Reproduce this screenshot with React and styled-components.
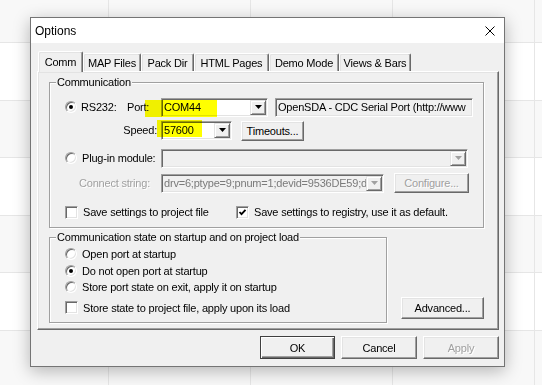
import React from "react";
import styled, { createGlobalStyle, css } from "styled-components";

const GlobalStyle = createGlobalStyle`
  html, body {
    margin: 0;
    padding: 0;
  }
  body {
    font-family: "Liberation Sans", Arial, sans-serif;
    font-size: 11px;
    letter-spacing: -0.2px;
    color: #000;
  }
`;

const Desktop = styled.div`
  width: 542px;
  height: 385px;
  box-sizing: border-box;
  padding: 17px 0 0 30px;
  overflow: hidden;
  background-color: #fff;
  background-image:
    repeating-linear-gradient(90deg, transparent 0 108px, #e6e6e6 108px 109px, transparent 109px 142px),
    repeating-linear-gradient(180deg, transparent 0 42px, #e6e6e6 42px 43px, transparent 43px 57.6px),
    repeating-linear-gradient(180deg, #f8f8f8 0 42px, #fff 42px 99.6px, #f8f8f8 99.6px 115.2px);
`;

const Window = styled.div`
  width: 475px;
  height: 350px;
  box-sizing: border-box;
  border: 1px solid #747474;
  background: #f0f0f0;
  box-shadow: 0 4px 16px rgba(0, 0, 0, 0.28);
  display: flex;
  flex-direction: column;
`;

const TitleBar = styled.div`
  height: 25px;
  flex-shrink: 0;
  background: #fff;
  display: flex;
  align-items: center;
  justify-content: space-between;
  padding: 0 9px 0 4px;
`;

const Title = styled.span`
  font-size: 12px;
  letter-spacing: 0;
`;

const Body = styled.div`
  flex: 1;
  display: flex;
  flex-direction: column;
  padding: 8px 5px 7px 6px;
`;

const TabStrip = styled.div`
  display: flex;
  align-items: flex-end;
  height: 20px;
  padding-left: 1px;
  position: relative;
  z-index: 1;
`;

const Tab = styled.div`
  width: ${(p) => p.$w}px;
  height: 18px;
  box-sizing: border-box;
  border: 1px solid;
  border-bottom: none;
  border-color: #fff #696969 transparent #fff;
  border-radius: 2px 2px 0 0;
  box-shadow: inset -1px 0 #a0a0a0, inset 1px 1px #e3e3e3;
  background: #f0f0f0;
  display: flex;
  align-items: center;
  justify-content: center;
  padding-top: 1px;

  ${(p) =>
    p.$active &&
    css`
      height: 21px;
      margin-bottom: -1px;
      padding-bottom: 2px;
    `}
`;

const Panel = styled.div`
  height: 259px;
  box-sizing: border-box;
  border: 1px solid;
  border-color: #fff #696969 #696969 #fff;
  box-shadow: inset -1px -1px #a0a0a0, inset 1px 1px #e3e3e3;
  padding: 4px 13px 0 11px;
  display: flex;
  flex-direction: column;
`;

const Group = styled.fieldset`
  width: ${(p) => p.$w}px;
  box-sizing: border-box;
  margin: 0;
  padding: 0;
  min-width: 0;
  border: 1px solid #a0a0a0;
  box-shadow: 1px 1px 0 #fff, inset 1px 1px 0 #fff;
`;

const Legend = styled.legend`
  margin-left: 6px;
  padding: 0 1px;
  line-height: 13px;
  background: #f0f0f0;
`;

const GroupBody = styled.div`
  display: flex;
  flex-direction: column;
  padding: ${(p) => p.$pad};
`;

const Row = styled.div`
  position: relative;
  display: flex;
  align-items: center;
  height: ${(p) => p.$h || 20}px;
  margin-top: ${(p) => p.$mt || 0}px;
`;

const Lead = styled.div`
  width: 96px;
  flex-shrink: 0;
  display: flex;
  align-items: center;
  justify-content: ${(p) => (p.$end ? "flex-end" : "flex-start")};
  padding: ${(p) => p.$pad || "0"};
  box-sizing: border-box;
`;

const Label = styled.span`
  width: ${(p) => (p.$w ? `${p.$w}px` : "auto")};
  flex-shrink: 0;
  white-space: nowrap;
  color: ${(p) => (p.$disabled ? "#a0a0a0" : "#000")};
  text-shadow: ${(p) => (p.$disabled ? "1px 1px 0 #fff" : "none")};
`;

const Radio = styled.span`
  width: 12px;
  height: 12px;
  box-sizing: border-box;
  flex-shrink: 0;
  border-radius: 50%;
  border: 1px solid;
  border-color: #a0a0a0 #fff #fff #a0a0a0;
  box-shadow: inset 1px 1px #696969, inset -1px -1px #e3e3e3;
  background: #fff;
  display: flex;
  align-items: center;
  justify-content: center;
  margin-right: ${(p) => p.$gap || 5}px;

  &::after {
    content: "";
    width: 4px;
    height: 4px;
    border-radius: 50%;
    background: ${(p) => (p.$checked ? "#000" : "transparent")};
  }
`;

const CheckBox = styled.span`
  width: 13px;
  height: 13px;
  box-sizing: border-box;
  flex-shrink: 0;
  border: 1px solid;
  border-color: #a0a0a0 #fff #fff #a0a0a0;
  box-shadow: inset 1px 1px #696969, inset -1px -1px #e3e3e3;
  background: #fff;
  display: flex;
  align-items: center;
  justify-content: center;
  margin-right: 5px;
`;

const Option = styled.div`
  display: flex;
  align-items: center;
  width: ${(p) => (p.$w ? `${p.$w}px` : "auto")};
  height: ${(p) => p.$h || 16}px;
  margin-top: ${(p) => p.$mt || 0}px;
  white-space: nowrap;
`;

const Combo = styled.div`
  width: ${(p) => p.$w}px;
  height: 19px;
  box-sizing: border-box;
  flex-shrink: 0;
  display: flex;
  padding: 1px;
  border: 1px solid;
  border-color: #a0a0a0 #fff #fff #a0a0a0;
  box-shadow: inset 1px 1px #696969, inset -1px -1px #e3e3e3;
  background: ${(p) => (p.$disabled ? "#f0f0f0" : "#fff")};
  margin-left: ${(p) => p.$ml || 0}px;
`;

const ComboText = styled.div`
  flex: 1;
  min-width: 0;
  overflow: hidden;
  white-space: nowrap;
  padding-left: 1px;
  line-height: 15px;
  color: ${(p) => (p.$disabled ? "#7a7a7a" : "#000")};
`;

const DropButton = styled.div`
  width: 16px;
  flex-shrink: 0;
  box-sizing: border-box;
  border: 1px solid;
  border-color: #e3e3e3 #696969 #696969 #e3e3e3;
  box-shadow: inset 1px 1px #fff, inset -1px -1px #a0a0a0;
  background: #f0f0f0;
  display: flex;
  align-items: center;
  justify-content: center;
`;

const ReadField = styled.div`
  width: ${(p) => p.$w}px;
  height: 19px;
  box-sizing: border-box;
  margin-left: ${(p) => p.$ml || 0}px;
  padding: 1px 2px;
  border: 1px solid;
  border-color: #a0a0a0 #fff #fff #a0a0a0;
  box-shadow: inset 1px 1px #696969, inset -1px -1px #e3e3e3;
  background: #f0f0f0;
  overflow: hidden;
  white-space: nowrap;
  line-height: 15px;
`;

const Button = styled.button`
  width: ${(p) => p.$w}px;
  height: ${(p) => p.$h || 20}px;
  box-sizing: border-box;
  flex-shrink: 0;
  margin: ${(p) => p.$m || 0};
  padding: 0;
  font: inherit;
  letter-spacing: inherit;
  color: #000;
  background: #f0f0f0;
  border: 1px solid;
  border-color: #fff #696969 #696969 #fff;
  box-shadow: inset -1px -1px #a0a0a0, inset 1px 1px #e3e3e3;

  &:disabled {
    color: #a0a0a0;
    text-shadow: 1px 1px 0 #fff;
  }

  ${(p) =>
    p.$default &&
    css`
      border-color: #404040;
      box-shadow: inset 1px 1px #fff, inset -1px -1px #696969,
        inset -2px -2px #a0a0a0;
    `}
`;

const Highlight = styled.span`
  position: absolute;
  left: ${(p) => p.$x}px;
  top: ${(p) => p.$y}px;
  width: ${(p) => p.$w}px;
  height: ${(p) => p.$h}px;
  background: #ffff00;
  mix-blend-mode: multiply;
  pointer-events: none;
`;

const LowerRow = styled.div`
  display: flex;
  align-items: flex-end;
  margin-top: 3px;
`;

const ButtonBar = styled.div`
  display: flex;
  justify-content: flex-end;
  gap: 6px;
  margin-top: 6px;
`;

const CloseIcon = () => (
  <svg width="10" height="10" viewBox="0 0 10 10">
    <path d="M0.5 0.5 L9.5 9.5 M9.5 0.5 L0.5 9.5" stroke="#000" strokeWidth="1" />
  </svg>
);

const Arrow = ({ disabled }) => (
  <svg width="7" height="4" viewBox="0 0 7 4">
    <polygon points="0,0 7,0 3.5,4" fill={disabled ? "#a0a0a0" : "#000"} />
  </svg>
);

const Tick = () => (
  <svg width="9" height="9" viewBox="0 0 9 9">
    <path d="M1.5 4 L3.5 6.2 L7.5 1.8" fill="none" stroke="#000" strokeWidth="1.8" />
  </svg>
);

const ComboBox = ({ w, ml, disabled, children }) => (
  <Combo $w={w} $ml={ml} $disabled={disabled}>
    <ComboText $disabled={disabled}>{children}</ComboText>
    <DropButton>
      <Arrow disabled={disabled} />
    </DropButton>
  </Combo>
);

const tabs = [
  { label: "Comm", w: 45 },
  { label: "MAP Files", w: 58 },
  { label: "Pack Dir", w: 53 },
  { label: "HTML Pages", w: 75 },
  { label: "Demo Mode", w: 70 },
  { label: "Views & Bars", w: 72 },
];

const startupOptions = [
  { label: "Open port at startup", checked: false },
  { label: "Do not open port at startup", checked: true },
  { label: "Store port state on exit, apply it on startup", checked: false },
];

const App = () => {
  return (
    <>
      <GlobalStyle />
      <Desktop>
        <Window>
          <TitleBar>
            <Title>Options</Title>
            <CloseIcon />
          </TitleBar>
          <Body>
            <TabStrip>
              {tabs.map((t, i) => (
                <Tab key={t.label} $w={t.w} $active={i === 0}>
                  {t.label}
                </Tab>
              ))}
            </TabStrip>
            <Panel>
              <Group $w={435}>
                <Legend>Communication</Legend>
                <GroupBody $pad="8px 0 7px 15px">
                  <Row>
                    <Lead>
                      <Radio $checked $gap={4} />
                      <Label $w={46}>RS232:</Label>
                      <Label>Port:</Label>
                    </Lead>
                    <ComboBox w={107}>COM44</ComboBox>
                    <ReadField $w={198} $ml={7}>
                      OpenSDA - CDC Serial Port (http://www
                    </ReadField>
                    <Highlight $x={80} $y={3} $w={72} $h={17} />
                  </Row>
                  <Row $mt={3}>
                    <Lead $end $pad="0 4px 0 0">
                      <Label>Speed:</Label>
                    </Lead>
                    <ComboBox w={71}>57600</ComboBox>
                    <Button $w={63} $m="1px 0 0 9px">
                      Timeouts...
                    </Button>
                    <Highlight $x={92} $y={0} $w={45} $h={17} />
                  </Row>
                  <Row $mt={8}>
                    <Lead>
                      <Radio />
                      <Label>Plug-in module:</Label>
                    </Lead>
                    <ComboBox w={307} disabled />
                  </Row>
                  <Row $mt={5}>
                    <Lead $pad="0 0 0 14px">
                      <Label $disabled>Connect string:</Label>
                    </Lead>
                    <ComboBox w={223} disabled>
                      drv=6;ptype=9;pnum=1;devid=9536DE59;d
                    </ComboBox>
                    <Button $w={75} $m="0 0 0 10px" disabled>
                      Configure...
                    </Button>
                  </Row>
                  <Row $mt={11} $h={16}>
                    <Option $w={171}>
                      <CheckBox />
                      Save settings to project file
                    </Option>
                    <Option>
                      <CheckBox>
                        <Tick />
                      </CheckBox>
                      Save settings to registry, use it as default.
                    </Option>
                  </Row>
                </GroupBody>
              </Group>
              <LowerRow>
                <Group $w={338}>
                  <Legend>Communication state on startup and on project load</Legend>
                  <GroupBody $pad="2px 0 6px 15px">
                    {startupOptions.map((o) => (
                      <Option key={o.label} $h={16.5}>
                        <Radio $checked={o.checked} />
                        {o.label}
                      </Option>
                    ))}
                    <Option $mt={4}>
                      <CheckBox />
                      Store state to project file, apply upon its load
                    </Option>
                  </GroupBody>
                </Group>
                <Button $w={83} $h={22} $m="0 0 4px 14px">
                  Advanced...
                </Button>
              </LowerRow>
            </Panel>
            <ButtonBar>
              <Button $w={75} $h={23} $default>
                OK
              </Button>
              <Button $w={76} $h={23}>
                Cancel
              </Button>
              <Button $w={76} $h={23} disabled>
                Apply
              </Button>
            </ButtonBar>
          </Body>
        </Window>
      </Desktop>
    </>
  );
};

export default App;
